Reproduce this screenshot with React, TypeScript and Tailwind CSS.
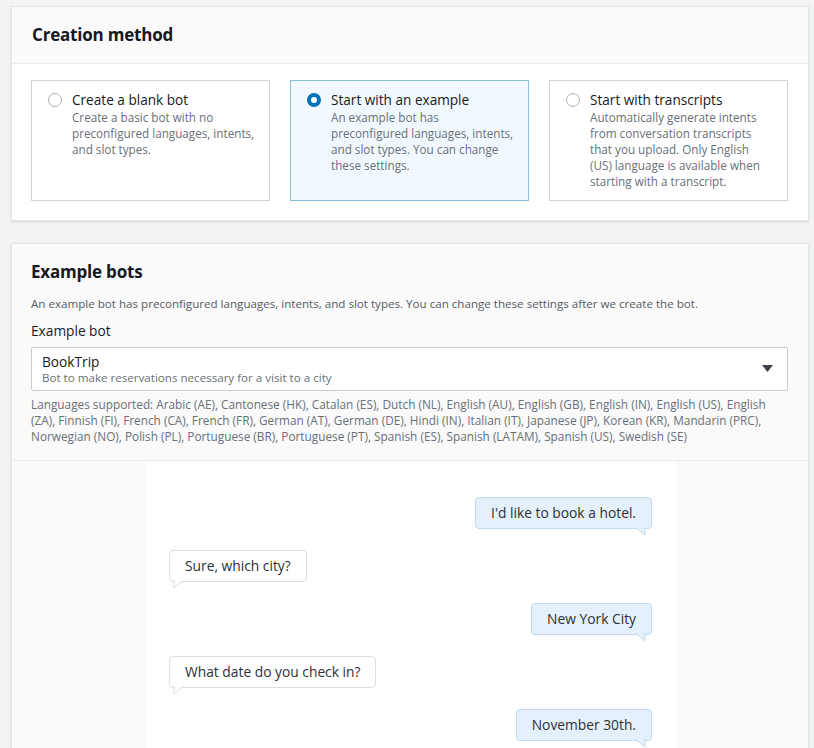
import React from 'react';

const FONT = { fontFamily: '"Open Sans", "Liberation Sans", sans-serif' };

interface Tile {
  title: string;
  desc: string;
  selected?: boolean;
  pad: string;
}

const tiles: Tile[] = [
  {
    title: 'Create a blank bot',
    desc: 'Create a basic bot with no preconfigured languages, intents, and slot types.',
    pad: 'pr-3',
  },
  {
    title: 'Start with an example',
    desc: 'An example bot has preconfigured languages, intents, and slot types. You can change these settings.',
    selected: true,
    pad: 'pr-3',
  },
  {
    title: 'Start with transcripts',
    desc: 'Automatically generate intents from conversation transcripts that you upload. Only English (US) language is available when starting with a transcript.',
    pad: 'pr-5',
  },
];

const languages =
  'Languages supported: Arabic (AE), Cantonese (HK), Catalan (ES), Dutch (NL), English (AU), English (GB), English (IN), English (US), English (ZA), Finnish (FI), French (CA), French (FR), German (AT), German (DE), Hindi (IN), Italian (IT), Japanese (JP), Korean (KR), Mandarin (PRC), Norwegian (NO), Polish (PL), Portuguese (BR), Portuguese (PT), Spanish (ES), Spanish (LATAM), Spanish (US), Swedish (SE)';

const messages = [
  { from: 'user', text: "I'd like to book a hotel." },
  { from: 'bot', text: 'Sure, which city?' },
  { from: 'user', text: 'New York City' },
  { from: 'bot', text: 'What date do you check in?' },
  { from: 'user', text: 'November 30th.' },
];

const Radio = ({ on }: { on?: boolean }) =>
  on ? (
    <span className="mt-[3px] w-[14px] h-[14px] shrink-0 rounded-full border-[4px] border-[#0073bb] bg-white" />
  ) : (
    <span className="mt-[3px] w-[14px] h-[14px] shrink-0 rounded-full border-[1.5px] border-[#aab7b8] bg-white" />
  );

const Bubble = ({ from, text }: { from: string; text: string }) => {
  const user = from === 'user';
  return (
    <div className={user ? 'flex justify-end' : 'flex justify-start'}>
      <div
        className={
          user
            ? 'relative h-[32px] px-[15px] flex items-center rounded-[4px] border border-[#c3d8ea] bg-[#e4f1fc] text-[13.8px] text-[#2b3136]'
            : 'relative h-[32px] px-[15px] flex items-center rounded-[4px] border border-[#d9dfe3] bg-white text-[13.8px] text-[#2b3136]'
        }
      >
        {text}
        {user ? (
          <svg className="absolute right-[5px] bottom-[-8px]" width="10" height="9" viewBox="0 0 10 9">
            <polygon points="0,0 9,0 9,8" fill="#e4f1fc" />
            <polyline points="0,0.5 9,8 9,0" fill="none" stroke="#c3d8ea" strokeWidth="1" />
          </svg>
        ) : (
          <svg className="absolute left-[3px] bottom-[-8px]" width="10" height="9" viewBox="0 0 10 9">
            <polygon points="1,0 10,0 1,8" fill="#ffffff" />
            <polyline points="1,0 1,8 10,0.5" fill="none" stroke="#d9dfe3" strokeWidth="1" />
          </svg>
        )}
      </div>
    </div>
  );
};

export default function App() {
  return (
    <div
      className="w-[814px] h-[748px] overflow-hidden bg-[#f2f3f3] pl-[11px] pr-[5px] pt-[6px] text-[#16191f]"
      style={FONT}
    >
      {/* Creation method */}
      <div className="bg-white border border-[#e3e6e6] shadow-[0_1px_2px_rgba(0,0,0,0.12)]">
        <div className="h-[57px] px-5 flex items-center bg-[#fafafa] border-b border-[#eaeded]">
          <h2 className="text-[17px] font-bold tracking-[-0.2px]">Creation method</h2>
        </div>
        <div className="pl-[19px] pr-5 pt-4 pb-[19px] grid grid-cols-3 gap-5">
          {tiles.map((t) => (
            <div
              key={t.title}
              className={
                (t.selected
                  ? 'h-[121px] flex gap-[10px] pl-4 pt-[9px] border border-[#8cc0dc] bg-[#f1f9ff] '
                  : 'h-[121px] flex gap-[10px] pl-4 pt-[9px] border border-[#cfd4d4] bg-white ') + t.pad
              }
            >
              <Radio on={t.selected} />
              <div>
                <div className="text-[13.6px] leading-[19px] text-[#16191f]">{t.title}</div>
                <div className="text-[11.7px] leading-[16px] text-[#687078]">{t.desc}</div>
              </div>
            </div>
          ))}
        </div>
      </div>

      {/* Example bots */}
      <div className="mt-[22px] bg-[#fafafa] border border-[#e3e6e6] shadow-[0_1px_2px_rgba(0,0,0,0.12)] h-[520px]">
        <div className="pl-[19px] pr-5 pt-[16px] pb-[16px] border-b border-[#eaeded]">
          <h2 className="text-[17px] leading-[24px] font-bold tracking-[-0.2px]">Example bots</h2>
          <p className="mt-[12px] text-[11.6px] leading-[16px] text-[#545b64]">
            An example bot has preconfigured languages, intents, and slot types. You can change these settings after we create the bot.
          </p>
          <div className="mt-[10px] text-[13.7px] leading-[18px] text-[#16191f]">Example bot</div>
          <div className="mt-[7px] h-[44px] bg-white border border-[#c9cfd0] rounded-[2px] flex items-center pl-[10px] pr-[14px]">
            <div className="flex-1">
              <div className="text-[13.7px] leading-[17px] text-[#16191f]">BookTrip</div>
              <div className="text-[11.6px] leading-[15px] text-[#687078]">
                Bot to make reservations necessary for a visit to a city
              </div>
            </div>
            <svg width="11" height="8" viewBox="0 0 11 8">
              <polygon points="0,0 11,0 5.5,7" fill="#3b4249" />
            </svg>
          </div>
          <p className="mt-[5px] text-[11.8px] leading-[16px] text-[#687078]">{languages}</p>
        </div>
        <div className="flex">
          <div className="w-[133px]" />
          <div className="w-[531px] h-[300px] bg-white px-[24px] pt-[36px] flex flex-col gap-[21px]">
            {messages.map((m) => (
              <Bubble key={m.text} from={m.from} text={m.text} />
            ))}
          </div>
        </div>
      </div>
    </div>
  );
}
